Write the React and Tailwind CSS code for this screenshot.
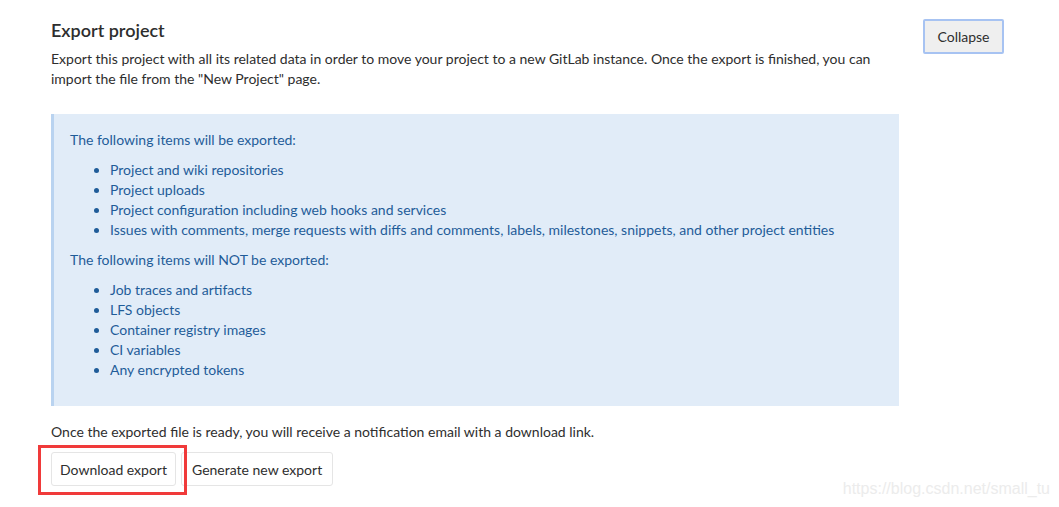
import React from 'react';

const exported = [
  'Project and wiki repositories',
  'Project uploads',
  'Project configuration including web hooks and services',
  'Issues with comments, merge requests with diffs and comments, labels, milestones, snippets, and other project entities',
];

const notExported = [
  'Job traces and artifacts',
  'LFS objects',
  'Container registry images',
  'CI variables',
  'Any encrypted tokens',
];

function ItemList({ items }) {
  return (
    <ul className="list-disc pl-[40px] my-[10px] marker:text-[#1f5c99]">
      {items.map(item => (
        <li key={item} className="leading-[20px]">{item}</li>
      ))}
    </ul>
  );
}

export default function App() {
  return (
    <div className="relative w-[1059px] h-[507px] bg-white overflow-hidden text-[14px] text-[#2e2e2e] font-['Lato','Noto_Sans',sans-serif]">
      <div className="flex pl-[51px] pt-[18px]">
        <div className="w-[848px]">
          <h4 className="text-[18px] font-semibold leading-[24px] text-[#2e2e2e]">Export project</h4>
          <p className="mt-[7px] leading-[20px]">
            Export this project with all its related data in order to move your project to a new GitLab instance. Once the export is finished, you can import the file from the "New Project" page.
          </p>

          <div className="mt-[25px] h-[292px] bg-[#e1ecf8] border-l-[3px] border-[#b9d3f0] text-[#1f5c99] pl-[16px] pr-4 pt-[16px]">
            <p className="leading-[20px]">The following items will be exported:</p>
            <ItemList items={exported} />
            <p className="leading-[20px]">The following items will NOT be exported:</p>
            <ItemList items={notExported} />
          </div>

          <p className="mt-[16px] leading-[20px]">Once the exported file is ready, you will receive a notification email with a download link.</p>

          <div className="mt-[10px] flex gap-[5px]">
            <div className="relative">
              <button className="h-[34px] px-[8px] border border-[#e5e5e5] rounded-[3px] bg-white text-[#2e2e2e]">Download export</button>
              <div className="absolute left-[-13px] top-[-7px] w-[149px] h-[50px] border-[3px] border-[#f03a3a] pointer-events-none" />
            </div>
            <button className="h-[34px] px-[10px] border border-[#e5e5e5] rounded-[3px] bg-white text-[#2e2e2e]">Generate new export</button>
          </div>
        </div>

        <div className="ml-[24px] mt-[1px]">
          <button className="h-[35px] w-[81px] border-2 border-[#a7c3f2] rounded-[2px] bg-[#efefef] text-[#2e2e2e]">Collapse</button>
        </div>
      </div>

      <div className="absolute right-[9px] bottom-[6px] text-[16px] text-[#ececec] font-['Liberation_Sans',sans-serif]">https://blog.csdn.net/small_tu</div>
    </div>
  );
}
